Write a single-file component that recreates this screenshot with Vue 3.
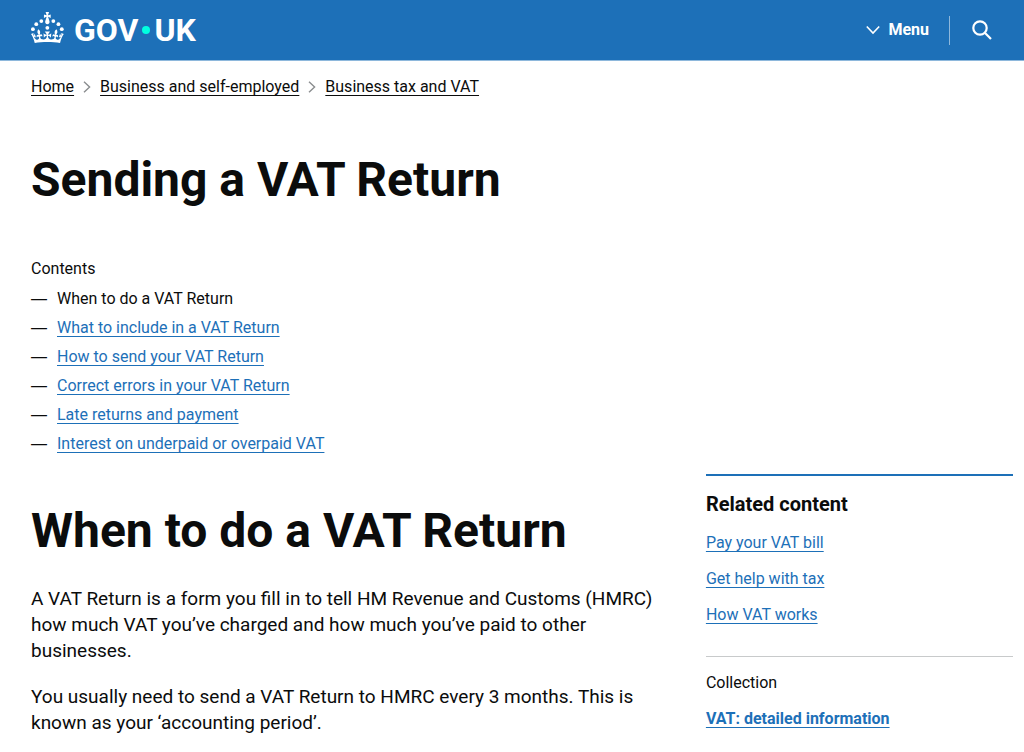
<script setup>
const crumbs = ['Home', 'Business and self-employed', 'Business tax and VAT']
const chapters = [
  'What to include in a VAT Return',
  'How to send your VAT Return',
  'Correct errors in your VAT Return',
  'Late returns and payment',
  'Interest on underpaid or overpaid VAT',
]
const related = ['Pay your VAT bill', 'Get help with tax', 'How VAT works']
</script>

<template>
  <div class="page">
    <header class="header">
      <a class="logo" href="#" aria-label="GOV.UK">
        <svg class="crown" viewBox="0 0 64 60" aria-hidden="true">
          <circle cx="20" cy="17.6" r="3.7" />
          <circle cx="10.2" cy="23.5" r="3.7" />
          <circle cx="3.7" cy="33.2" r="3.7" />
          <circle cx="31.7" cy="30.6" r="3.7" />
          <circle cx="43.3" cy="17.6" r="3.7" />
          <circle cx="53.2" cy="23.5" r="3.7" />
          <circle cx="59.7" cy="33.2" r="3.7" />
          <path d="M33.1,9.8c.2-.1.3-.3.5-.5l4.6,2.4v-6.8l-4.6,1.5c-.1-.2-.3-.3-.5-.5l1.9-5.9h-6.7l1.9,5.9c-.2.1-.3.3-.5.5l-4.6-1.5v6.8l4.6-2.4c.1.2.3.3.5.5l-2.6,8c-.9,2.8,1.2,5.7,4.1,5.7h0c3,0,5.1-2.9,4.1-5.7l-2.6-8ZM37,37.9s-3.4,3.8-4.1,6.1c2.2,0,4.2-.5,6.4-2.8l-.7,8.5c-2-2.8-4.4-4.1-5.7-3.8.1,3.1.5,6.7,5.8,7.2,3.7.3,6.7-1.5,7-3.8.4-2.6-2-4.3-3.7-1.6-1.4-4.5,2.4-6.1,4.9-3.2-1.9-4.5-1.8-7.7,2.4-10.9,3,4,2.6,7.3-1.2,11.1,2.4-1.3,6.2,0,4,4.6-1.2-2.8-3.7-2.2-4.2.2-.3,1.7.7,3.7,3,4.2,1.9.3,4.7-.9,7-5.9-1.3,0-2.4.7-3.9,1.7l2.4-8c.6,2.3,1.4,3.7,2.2,4.5.6-1.6.5-2.8,0-5.3l5,1.8c-2.6,3.6-5.2,8.7-7.3,17.5-7.4-1.1-15.7-1.7-24.5-1.7h0c-8.8,0-17.1.6-24.5,1.7-2.1-8.9-4.7-13.9-7.3-17.5l5-1.8c-.5,2.5-.6,3.7,0,5.3.8-.8,1.6-2.3,2.2-4.5l2.4,8c-1.5-1-2.6-1.7-3.9-1.7,2.3,5,5.2,6.2,7,5.9,2.3-.4,3.3-2.4,3-4.2-.5-2.4-3-3.1-4.2-.2-2.2-4.6,1.6-6,4-4.6-3.7-3.7-4.2-7.1-1.2-11.1,4.2,3.2,4.3,6.4,2.4,10.9,2.5-2.8,6.3-1.3,4.9,3.2-1.8-2.7-4.1-1-3.7,1.6.3,2.3,3.3,4.1,7,3.8,5.4-.5,5.7-4.2,5.8-7.2-1.3-.2-3.7,1-5.7,3.8l-.7-8.5c2.2,2.3,4.2,2.7,6.4,2.8-.7-2.3-4.1-6.1-4.1-6.1h10.6,0Z" />
        </svg>
        <span class="word">GOV</span><span class="dot"></span><span class="word">UK</span>
      </a>
      <div class="actions">
        <button class="menu" type="button">
          <svg class="chevron" viewBox="0 0 14 10" aria-hidden="true"><path d="M.8 1.5 7 8l6.2-6.5" /></svg>
          Menu
        </button>
        <button class="search" type="button" aria-label="Search">
          <svg class="glass" viewBox="0 0 20 20" aria-hidden="true">
            <circle cx="8" cy="8" r="6.7" />
            <path d="m12.8 12.8 6.2 6.2" />
          </svg>
        </button>
      </div>
    </header>

    <div class="content">
      <nav aria-label="Breadcrumb">
        <ol class="crumbs">
          <li v-for="(crumb, i) in crumbs" :key="crumb">
            <svg v-if="i" class="sep" viewBox="0 0 8 12" aria-hidden="true"><path d="m1 .8 5.6 5.2L1 11.2" /></svg>
            <a href="#">{{ crumb }}</a>
          </li>
        </ol>
      </nav>

      <h1 class="title">Sending a VAT Return</h1>

      <nav class="contents" aria-labelledby="contents-title">
        <h2 id="contents-title" class="contents-title">Contents</h2>
        <ol class="chapters">
          <li aria-current="true">When to do a VAT Return</li>
          <li v-for="chapter in chapters" :key="chapter"><a href="#">{{ chapter }}</a></li>
        </ol>
      </nav>

      <div class="columns">
        <main>
          <h2 class="title section">When to do a VAT Return</h2>
          <p>A VAT Return is a form you fill in to tell HM Revenue and Customs (HMRC) how much VAT you’ve charged and how much you’ve paid to other businesses.</p>
          <p>You usually need to send a VAT Return to HMRC every 3 months. This is known as your ‘accounting period’.</p>
        </main>
        <aside class="related">
          <h2 class="related-title">Related content</h2>
          <ul class="links">
            <li v-for="item in related" :key="item"><a href="#">{{ item }}</a></li>
          </ul>
          <div class="collection">
            <h3 class="collection-title">Collection</h3>
            <a class="strong" href="#">VAT: detailed information</a>
          </div>
        </aside>
      </div>
    </div>
  </div>
</template>

<style>
body {
  margin: 0;
  background: #fff;
}
</style>

<style scoped>
.page {
  font-family: Roboto, "Liberation Sans", sans-serif;
  font-size: 16px;
  line-height: 20px;
  color: #0b0c0c;
}

.header {
  display: flex;
  justify-content: space-between;
  align-items: center;
  height: 61px;
  padding: 0 32px 0 31px;
  background: #1d70b8;
  border-bottom: 1px solid #8eb8dc;
  box-sizing: border-box;
}

.logo {
  display: flex;
  align-items: center;
  color: #fff;
  text-decoration: none;
}

.crown {
  width: 33px;
  height: 31px;
  margin: 0 10px 6px 0;
  fill: #fff;
}

.word {
  font-size: 32px;
  font-weight: 700;
  line-height: 36px;
}

.dot {
  width: 8px;
  height: 8px;
  margin: 0 4px;
  border-radius: 50%;
  background: #00ffe0;
}

.actions {
  display: flex;
  align-items: center;
}

.menu,
.search {
  display: flex;
  align-items: center;
  padding: 0;
  border: 0;
  background: none;
  color: #fff;
  font: inherit;
  font-weight: 700;
}

.menu {
  gap: 8px;
  padding-right: 20px;
}

.search {
  height: 29px;
  padding-left: 22px;
  border-left: 1px solid #8eb8dc;
}

.chevron {
  width: 14px;
  height: 10px;
}

.glass {
  width: 20px;
  height: 20px;
}

.chevron,
.glass,
.sep {
  fill: none;
  stroke: #fff;
  stroke-width: 2.2;
}

.chevron {
  stroke-width: 1.6;
}

.content {
  padding: 16px 11px 24px 31px;
}

.crumbs,
.chapters,
.links {
  margin: 0;
  padding: 0;
  list-style: none;
}

.crumbs,
.crumbs li {
  display: flex;
  align-items: center;
}

.sep {
  width: 8px;
  height: 12px;
  margin: 0 9px;
  stroke: #8a8d8f;
  stroke-width: 1.4;
}

a {
  color: #1d70b8;
  text-decoration-thickness: 1px;
  text-underline-offset: 3px;
}

.crumbs a {
  color: #0b0c0c;
}

.title {
  margin: 58px 0 0;
  font-size: 48px;
  font-weight: 700;
  line-height: 50px;
}

.contents {
  margin-top: 54px;
}

.contents-title,
.collection-title {
  margin: 0;
  font-size: 16px;
  font-weight: 400;
}

.chapters {
  padding-top: 5px;
}

.chapters li {
  display: flex;
  line-height: 29px;
}

.chapters li::before {
  content: "—";
  width: 26px;
  flex: none;
  font-family: "Liberation Sans", sans-serif;
}

.columns {
  display: grid;
  grid-template-columns: minmax(0, 21fr) minmax(0, 10fr);
  gap: 30px;
  margin-top: 16px;
}

.section {
  margin: 32px 0 0;
}

p {
  margin: 20px 0 0;
  font-size: 19px;
  line-height: 26px;
}

.section + p {
  margin-top: 30px;
}

.related {
  border-top: 2px solid #1d70b8;
}

.related-title {
  margin: 16px 0 0;
  font-size: 20px;
  font-weight: 700;
  line-height: 24px;
}

.links {
  display: grid;
  gap: 16px;
  padding: 17px 0 31px;
}

.collection {
  display: grid;
  gap: 16px;
  justify-items: start;
  padding-top: 16px;
  border-top: 1px solid #c8cacb;
}

.strong {
  font-weight: 700;
}
</style>
